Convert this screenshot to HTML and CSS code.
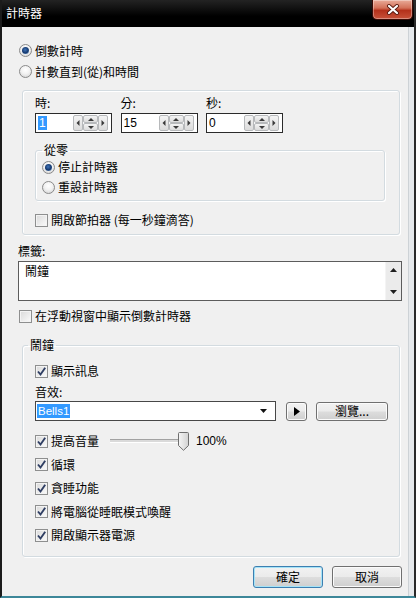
FILE: index.html
```html
<!DOCTYPE html>
<html lang="zh-Hant">
<head>
<meta charset="utf-8">
<title>計時器</title>
<link rel="stylesheet" href="styles.css">
</head>
<body>
<div class="window">
  <div class="titlebar">
    <span class="title">計時器</span>
    <div class="close">
      <svg width="14" height="11" viewBox="0 0 14 11"><path d="M3 2 L11 9 M11 2 L3 9" stroke="#5a1a10" stroke-width="4" stroke-linecap="round"/><path d="M3 2 L11 9 M11 2 L3 9" stroke="#fff" stroke-width="2.2" stroke-linecap="round"/></svg>
    </div>
  </div>
  <div class="client">
    <div class="opt top-opt"><span class="radio on"></span><span>倒數計時</span></div>
    <div class="opt top-opt"><span class="radio"></span><span>計數直到(從)和時間</span></div>

    <div class="group">
      <div class="spins">
        <div class="spin-field">
          <div class="lbl">時:</div>
          <div class="spin">
            <span class="val"><span class="sel">1</span></span>
            <span class="sb"><svg width="4" height="6" viewBox="0 0 4 6"><path d="M3.5 0 L0.5 3 L3.5 6Z" fill="#3a3a3a"/></svg></span>
            <span class="ud"><span class="u"><svg width="6" height="3" viewBox="0 0 6 3"><path d="M0 3 L3 0 L6 3Z" fill="#3a3a3a"/></svg></span><span class="d"><svg width="6" height="3" viewBox="0 0 6 3"><path d="M0 0 L3 3 L6 0Z" fill="#3a3a3a"/></svg></span></span>
            <span class="sb"><svg width="4" height="6" viewBox="0 0 4 6"><path d="M0.5 0 L3.5 3 L0.5 6Z" fill="#3a3a3a"/></svg></span>
          </div>
        </div>
        <div class="spin-field">
          <div class="lbl">分:</div>
          <div class="spin">
            <span class="val">15</span>
            <span class="sb"><svg width="4" height="6" viewBox="0 0 4 6"><path d="M3.5 0 L0.5 3 L3.5 6Z" fill="#3a3a3a"/></svg></span>
            <span class="ud"><span class="u"><svg width="6" height="3" viewBox="0 0 6 3"><path d="M0 3 L3 0 L6 3Z" fill="#3a3a3a"/></svg></span><span class="d"><svg width="6" height="3" viewBox="0 0 6 3"><path d="M0 0 L3 3 L6 0Z" fill="#3a3a3a"/></svg></span></span>
            <span class="sb"><svg width="4" height="6" viewBox="0 0 4 6"><path d="M0.5 0 L3.5 3 L0.5 6Z" fill="#3a3a3a"/></svg></span>
          </div>
        </div>
        <div class="spin-field">
          <div class="lbl">秒:</div>
          <div class="spin">
            <span class="val">0</span>
            <span class="sb"><svg width="4" height="6" viewBox="0 0 4 6"><path d="M3.5 0 L0.5 3 L3.5 6Z" fill="#3a3a3a"/></svg></span>
            <span class="ud"><span class="u"><svg width="6" height="3" viewBox="0 0 6 3"><path d="M0 3 L3 0 L6 3Z" fill="#3a3a3a"/></svg></span><span class="d"><svg width="6" height="3" viewBox="0 0 6 3"><path d="M0 0 L3 3 L6 0Z" fill="#3a3a3a"/></svg></span></span>
            <span class="sb"><svg width="4" height="6" viewBox="0 0 4 6"><path d="M0.5 0 L3.5 3 L0.5 6Z" fill="#3a3a3a"/></svg></span>
          </div>
        </div>
      </div>

      <fieldset class="box zero">
        <legend>從零</legend>
        <div class="opt"><span class="radio on"></span><span>停止計時器</span></div>
        <div class="opt"><span class="radio"></span><span>重設計時器</span></div>
      </fieldset>

      <div class="opt metro"><span class="check"></span><span>開啟節拍器 (每一秒鐘滴答)</span></div>
    </div>

    <div class="lbl tag-lbl">標籤:</div>
    <div class="textarea">
      <div class="ta-text">鬧鐘</div>
      <div class="vscroll">
        <svg width="7" height="4" viewBox="0 0 7 4"><path d="M0 4 L3.5 0 L7 4Z" fill="#1e1e1e"/></svg>
        <svg width="7" height="4" viewBox="0 0 7 4"><path d="M0 0 L3.5 4 L7 0Z" fill="#1e1e1e"/></svg>
      </div>
    </div>

    <div class="opt float"><span class="check"></span><span>在浮動視窗中顯示倒數計時器</span></div>

    <fieldset class="box alarm">
      <legend>鬧鐘</legend>
      <div class="alarm-body">
        <div class="opt first"><span class="check"><svg width="11" height="11" viewBox="0 0 11 11"><path d="M2 5.5 L4.5 8.5 L9.2 1.8" fill="none" stroke="#2f3e63" stroke-width="1.9"/></svg></span><span>顯示訊息</span></div>
        <div class="lbl snd-lbl">音效:</div>
        <div class="sound">
          <div class="combo">
            <span class="sel">Bells1</span>
            <svg width="7" height="4" viewBox="0 0 7 4"><path d="M0 0 H7 L3.5 4Z" fill="#111"/></svg>
          </div>
          <div class="btn play"><svg width="6" height="9" viewBox="0 0 6 9"><path d="M0 0 L6 4.5 L0 9Z" fill="#000"/></svg></div>
          <div class="btn browse">瀏覽...</div>
        </div>
        <div class="opt row vol">
          <span class="check"><svg width="11" height="11" viewBox="0 0 11 11"><path d="M2 5.5 L4.5 8.5 L9.2 1.8" fill="none" stroke="#2f3e63" stroke-width="1.9"/></svg></span><span>提高音量</span>
          <div class="slider">
            <div class="track"></div>
            <svg class="thumb" width="11" height="19" viewBox="0 0 11 19">
              <defs><linearGradient id="tg" x1="0" y1="0" x2="1" y2="0"><stop offset="0" stop-color="#f6f6f6"/><stop offset="1" stop-color="#d2d2d2"/></linearGradient></defs>
              <path d="M0.5 1.5 Q0.5 0.5 1.5 0.5 H9.5 Q10.5 0.5 10.5 1.5 V13.5 L5.5 18.3 L0.5 13.5 Z" fill="url(#tg)" stroke="#6f6f6f"/>
            </svg>
          </div>
          <span class="pct">100%</span>
        </div>
        <div class="opt row"><span class="check"><svg width="11" height="11" viewBox="0 0 11 11"><path d="M2 5.5 L4.5 8.5 L9.2 1.8" fill="none" stroke="#2f3e63" stroke-width="1.9"/></svg></span><span>循環</span></div>
        <div class="opt row"><span class="check"><svg width="11" height="11" viewBox="0 0 11 11"><path d="M2 5.5 L4.5 8.5 L9.2 1.8" fill="none" stroke="#2f3e63" stroke-width="1.9"/></svg></span><span>貪睡功能</span></div>
        <div class="opt row"><span class="check"><svg width="11" height="11" viewBox="0 0 11 11"><path d="M2 5.5 L4.5 8.5 L9.2 1.8" fill="none" stroke="#2f3e63" stroke-width="1.9"/></svg></span><span>將電腦從睡眠模式喚醒</span></div>
        <div class="opt row"><span class="check"><svg width="11" height="11" viewBox="0 0 11 11"><path d="M2 5.5 L4.5 8.5 L9.2 1.8" fill="none" stroke="#2f3e63" stroke-width="1.9"/></svg></span><span>開啟顯示器電源</span></div>
      </div>
    </fieldset>

    <div class="buttons">
      <div class="btn dlg default">確定</div>
      <div class="btn dlg">取消</div>
    </div>
  </div>
</div>
</body>
</html>
```

FILE: styles.css
```css
* { box-sizing: border-box; }
html, body { margin: 0; padding: 0; background: #ffffff; }
body {
  font-family: "Noto Sans CJK TC", "Noto Sans CJK SC", sans-serif;
  font-size: 12px;
  line-height: 14px;
  color: #000;
}

.window {
  width: 416px;
  height: 598px;
  display: flex;
  flex-direction: column;
  background: #e6e9ec;
  border-left: 2px solid #1b1b1b;
  border-right: 2px solid #2a2a2a;
  border-bottom: 2px solid #3d8799;
}

.titlebar {
  height: 27px;
  flex: none;
  display: flex;
  justify-content: space-between;
  align-items: flex-start;
  background: linear-gradient(#232323, #000 60%);
  color: #fff;
  padding-left: 4px;
  padding-right: 1px;
}
.title { line-height: 26px; font-size: 12px; }
.close {
  width: 41px;
  height: 20px;
  border: 1px solid #3b0b05;
  border-top: none;
  border-radius: 0 0 5px 5px;
  background: linear-gradient(#e9ab99 0%, #d37058 42%, #b4311b 55%, #c8523a 100%);
  box-shadow: inset 0 0 0 1px rgba(255, 255, 255, 0.35);
  display: flex;
  align-items: center;
  justify-content: center;
}

.client {
  flex: 1;
  background: #f0f0f0;
  margin-right: 5px;
  border-right: 1px solid #cdd2d6;
  padding-top: 13px;
  display: flex;
  flex-direction: column;
  align-items: flex-start;
}

.opt {
  display: flex;
  align-items: center;
  height: 20px;
  white-space: nowrap;
}
.top-opt { height: 21px; padding-left: 17px; }

.radio {
  width: 13px;
  height: 13px;
  flex: none;
  border-radius: 50%;
  border: 1px solid #8a8a8a;
  background: radial-gradient(circle at 50% 35%, #ffffff 0, #f2f2f2 45%, #cfcfcf 100%);
  margin-right: 3px;
  display: flex;
  align-items: center;
  justify-content: center;
}
.radio.on::after {
  content: "";
  width: 7px;
  height: 7px;
  border-radius: 50%;
  background: radial-gradient(circle at 45% 40%, #3f74b8 0, #15386e 55%, #88b7e4 100%);
}

.check {
  width: 13px;
  height: 13px;
  flex: none;
  border: 1px solid #8e8f8f;
  background: linear-gradient(135deg, #d9d9d9, #fbfbfb);
  box-shadow: inset 0 0 0 1px #f3f3f3;
  margin-right: 3px;
  display: flex;
  align-items: center;
  justify-content: center;
}

.box {
  border: 1px solid #d3dbe0;
  border-radius: 3px;
  box-shadow: 1px 1px 0 #ffffff, inset 1px 1px 0 #ffffff;
  margin: 0;
  min-width: 0;
}
.box legend { padding: 0 2px; line-height: 14px; }

.group {
  margin: 8px 0 0 20px;
  width: 378px;
  border: 1px solid #d3dbe0;
  border-radius: 3px;
  box-shadow: 1px 1px 0 #ffffff, inset 1px 1px 0 #ffffff;
  padding: 5px 0 4px 12px;
}
.spins { display: flex; gap: 8.5px; }
.lbl { line-height: 14px; height: 14px; }
.spin {
  margin-top: 3px;
  width: 77px;
  height: 20px;
  border: 1px solid #2b2b2b;
  background: #fff;
  display: flex;
  align-items: center;
  padding-right: 3px;
}
.val {
  flex: 1;
  padding-left: 2px;
  font-family: "Liberation Sans", sans-serif;
  font-size: 12px;
  line-height: 15px;
}
.val .sel { background: #3399ff; color: #fff; padding: 0 1px; }
.sb, .ud span {
  border: 1px solid #b7b9bb;
  border-radius: 2px;
  background: linear-gradient(#f4f4f4, #dcdcdc);
  display: flex;
  align-items: center;
  justify-content: center;
}
.sb { width: 10px; height: 16px; }
.ud { width: 15px; height: 16px; display: flex; flex-direction: column; }
.ud span { flex: 1; }

.zero {
  margin-top: 10px;
  width: 350px;
  padding: 0 0 3px 6px;
}
.metro { margin-top: 9px; }

.tag-lbl { margin: 9px 0 0 16px; }
.textarea {
  margin: 3px 0 0 16px;
  width: 384px;
  height: 40px;
  border: 1px solid #5c5c5c;
  background: #fff;
  display: flex;
}
.ta-text { flex: 1; padding: 2px 0 0 6px; line-height: 14px; }
.vscroll {
  width: 16px;
  background: #ebebeb;
  border-left: 1px solid #f4f4f4;
  display: flex;
  flex-direction: column;
  justify-content: space-between;
  align-items: center;
  padding: 6px 0 6px;
}

.float { margin-top: 5px; padding-left: 17px; }

.alarm {
  margin-top: 12px;
  margin-left: 20px;
  width: 378px;
  padding: 0 0 9px 5px;
}
.alarm-body { padding-left: 7px; }
.first { margin-top: 9px; }
.snd-lbl { margin-top: 4px; }
.sound {
  margin-top: 2px;
  display: flex;
  align-items: center;
  height: 20px;
}
.combo {
  width: 241px;
  height: 20px;
  border: 1px solid #474747;
  background: #fff;
  display: flex;
  align-items: center;
  justify-content: space-between;
  padding: 0 8px 0 1px;
}
.combo .sel {
  font-family: "Liberation Sans", sans-serif;
  font-size: 11.5px;
  line-height: 14px;
  background: #3399ff;
  color: #fff;
  padding: 0 1px;
}

.btn {
  border: 1px solid #707070;
  border-radius: 3px;
  background: linear-gradient(#f2f2f2 0%, #ebebeb 49%, #dddddd 51%, #cfcfcf 100%);
  box-shadow: inset 0 0 0 1px #fbfbfb;
  display: flex;
  align-items: center;
  justify-content: center;
  white-space: nowrap;
}
.play { width: 21px; height: 19px; margin-left: 10px; }
.browse { width: 72px; height: 19px; margin-left: 9px; }

.row { height: 23.5px; }
.vol { margin-top: 8.5px; }
.slider { display: flex; align-items: center; margin-left: 11px; }
.track {
  width: 70px;
  height: 4px;
  border-top: 1px solid #a2a2a2;
  border-bottom: 1px solid #ffffff;
  background: #dadada;
}
.thumb { margin-left: -2px; display: block; }
.pct {
  margin-left: 7px;
  font-family: "Liberation Sans", sans-serif;
  font-size: 12px;
}

.buttons {
  align-self: stretch;
  display: flex;
  justify-content: flex-end;
  gap: 9px;
  margin-top: 9px;
  padding-right: 6px;
}
.dlg { width: 70px; height: 22px; }
.default {
  border-color: #3c7fb1;
  box-shadow: inset 0 0 0 1px #a5e3f7;
}
```
